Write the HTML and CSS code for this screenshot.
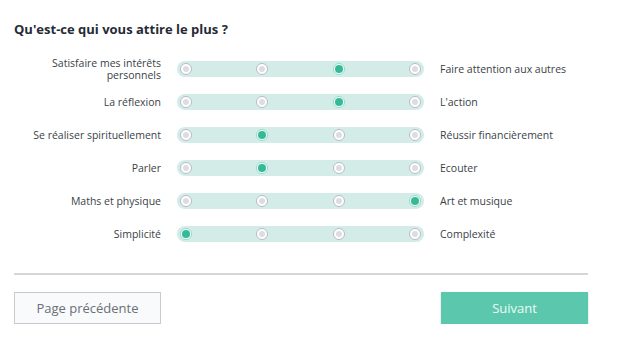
FILE: index.html
```html
<!DOCTYPE html>
<html lang="fr">
<head>
  <meta charset="UTF-8" />
  <title>Questionnaire</title>
  <link rel="stylesheet" href="styles.css">
</head>
<body>
  <div class="page">
    <h1>Qu'est-ce qui vous attire le plus ?</h1>

    <div class="scales">
      <div class="row">
        <div class="label-left">Satisfaire mes intérêts personnels</div>
        <div class="track">
          <span class="dot"></span><span class="dot"></span><span class="dot on"></span><span class="dot"></span>
        </div>
        <div class="label-right">Faire attention aux autres</div>
      </div>
      <div class="row">
        <div class="label-left">La réflexion</div>
        <div class="track">
          <span class="dot"></span><span class="dot"></span><span class="dot on"></span><span class="dot"></span>
        </div>
        <div class="label-right">L'action</div>
      </div>
      <div class="row">
        <div class="label-left">Se réaliser spirituellement</div>
        <div class="track">
          <span class="dot"></span><span class="dot on"></span><span class="dot"></span><span class="dot"></span>
        </div>
        <div class="label-right">Réussir financièrement</div>
      </div>
      <div class="row">
        <div class="label-left">Parler</div>
        <div class="track">
          <span class="dot"></span><span class="dot on"></span><span class="dot"></span><span class="dot"></span>
        </div>
        <div class="label-right">Ecouter</div>
      </div>
      <div class="row">
        <div class="label-left">Maths et physique</div>
        <div class="track">
          <span class="dot"></span><span class="dot"></span><span class="dot"></span><span class="dot on"></span>
        </div>
        <div class="label-right">Art et musique</div>
      </div>
      <div class="row">
        <div class="label-left">Simplicité</div>
        <div class="track">
          <span class="dot on"></span><span class="dot"></span><span class="dot"></span><span class="dot"></span>
        </div>
        <div class="label-right">Complexité</div>
      </div>
    </div>

    <hr>

    <div class="actions">
      <button class="btn-prev">Page précédente</button>
      <button class="btn-next">Suivant</button>
    </div>
  </div>
</body>
</html>
```

FILE: styles.css
```css
body {
  margin: 0;
  background: #fff;
  font-family: "Open Sans", "Noto Sans", sans-serif;
  color: #2d3340;
}

.page {
  width: 574px;
  padding: 16px 0 0 14px;
}

h1 {
  margin: 0;
  font-size: 13px;
  font-weight: 700;
  line-height: 26px;
  color: #262b36;
}

.scales {
  margin-top: 10px;
}

.row {
  display: grid;
  grid-template-columns: 147px 247px 1fr;
  column-gap: 16px;
  align-items: center;
  height: 33px;
  font-size: 10.5px;
  line-height: 12px;
  color: #3a3f48;
}

.label-left {
  text-align: right;
  padding-left: 18px;
}

.track {
  height: 16px;
  border-radius: 8px;
  background: #d3ece7;
  display: flex;
  justify-content: space-between;
  align-items: center;
  padding: 0 3px;
}

.dot {
  width: 10px;
  height: 10px;
  border-radius: 50%;
  background: #fff;
  border: 1px solid #b9bcc2;
  display: flex;
  align-items: center;
  justify-content: center;
}

.dot::after {
  content: "";
  width: 6px;
  height: 6px;
  border-radius: 50%;
  background: #dcdde2;
}

.dot.on {
  border-color: #8fdccb;
}

.dot.on::after {
  width: 8px;
  height: 8px;
  background: #36b997;
}

hr {
  margin: 23px 0 0;
  border: none;
  border-top: 2px solid #d6d6d6;
}

.actions {
  display: flex;
  justify-content: space-between;
  margin-top: 17px;
}

.actions button {
  width: 147px;
  height: 32px;
  font-family: "Open Sans", "Noto Sans", sans-serif;
  font-size: 13px;
  cursor: pointer;
}

.btn-prev {
  background: #f9fafc;
  border: 1px solid #c9cacd;
  color: #6b6f77;
}

.btn-next {
  background: #5bc8ae;
  border: none;
  color: #eefaf6;
  box-shadow: 0 1px 2px rgba(0,0,0,0.2);
}
```
